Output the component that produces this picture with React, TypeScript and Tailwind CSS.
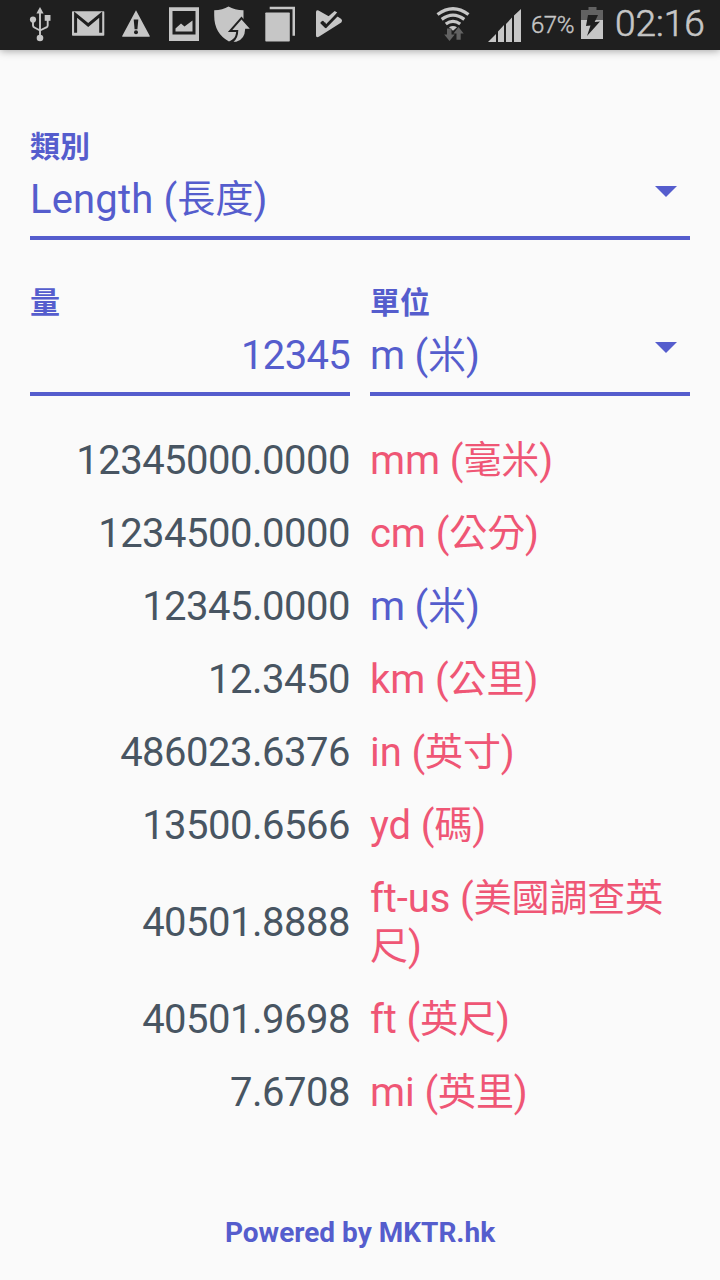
import type { ReactNode } from "react";

const G = "#c6c6c6";
const D = "#1f1f1f";

function Icon({ className, box, children }: { className: string; box: string; children: ReactNode }) {
  return (
    <svg className={`shrink-0 ${className}`} viewBox={box} fill={G}>
      {children}
    </svg>
  );
}

function StatusBar() {
  return (
    <header className="flex h-[50px] shrink-0 items-start bg-[#1f1f1f] text-[#c6c6c6] shadow-[0_1px_8px_rgba(0,0,0,0.35)]">
      <Icon className="ml-7 h-[50px] w-6" box="28 0 24 50">
        <path d="M40 7l3.6 6.4h-7.2z" />
        <circle cx="33" cy="19.5" r="3.1" />
        <rect x="44.7" y="15" width="5.8" height="5.8" />
        <circle cx="40" cy="38" r="3.3" />
        <path d="M40 12v25M33 20v5.5q0 1.5 1.5 2L40 30.5M47.7 20v5.5q0 1.5-1.5 2L40 30.5" fill="none" stroke={G} strokeWidth="1.9" />
      </Icon>
      <Icon className="ml-5 h-[50px] w-[33px]" box="72 0 33 50">
        <rect x="72" y="11.3" width="32.3" height="24.5" rx="0.8" />
        <path d="M75.6 32.8V14.6L88.2 25l12.5-10.4v18.2" fill="none" stroke={D} strokeWidth="3" />
        <path d="M77.5 13h21.5l-10.8 8.8z" />
      </Icon>
      <Icon className="ml-4 h-[50px] w-[30px]" box="121 0 30 50">
        <path d="M136 10.3l13.8 25.8q.3.7-.6.7h-26.5q-.9 0-.5-.7z" />
        <path d="M133.7 19.5h4.6l-.9 9.7h-2.8z" fill={D} />
        <circle cx="136" cy="32.3" r="2" fill={D} />
      </Icon>
      <Icon className="ml-[18px] h-[50px] w-[30px]" box="169 0 30 50">
        <path fillRule="evenodd" d="M169 7.3h30v33.7h-30zM172.5 11v23.5h23V11z" />
        <path d="M175.5 31.5v-3l5.5-5 3.500 3 8-6v11z" />
      </Icon>
      <Icon className="ml-[14px] h-[50px] w-[38px]" box="213 0 38 50">
        <path d="M228.5 6.5q6 3.500 15 3.700v8q0 16-14.500 23.300q-14.800-8-14.800-26v-5.300q8.500-.2 14.300-3.700z" />
        <path d="M241.500 19.500l8.300 9.300h-4.600q-.4 11-9 12.900h-2.700q4.700-3.500 4.800-11.700h-6z" stroke={D} strokeWidth="4" />
        <path d="M241.500 19.500l8.300 9.300h-4.600q-.4 11-9 12.900h-2.700q4.700-3.500 4.800-11.700h-6z" />
      </Icon>
      <Icon className="ml-[14px] h-[50px] w-[30px]" box="265 0 30 50">
        <rect x="265.3" y="12.5" width="24.5" height="29" rx="0.7" />
        <path d="M269.7 6.7h25.3v29h-2.5V9.3h-22.8z" />
      </Icon>
      <Icon className="ml-5 h-[50px] w-[28px]" box="315 0 28 50">
        <path d="M316 12q0-2.400 2.500-1.500l10.200 5.700 1.500.3-5 6.500-2.200-2.200-2.600 2.500 5 5 10.600-12.800 5.300 3.500q1.600 1.600 0 3.400l-22.500 14.300q-2.800 1.400-2.800-1.300z" />
        <path d="M325 19.500l3.500-3.300 6.200-5.200 2.500 1.600-11 13.400z" />
        <path d="M321.300 21.700l4.700 4.500L338 14" fill="none" stroke={D} strokeWidth="2.800" />
      </Icon>
      <Icon className="ml-[93px] h-[50px] w-[34px]" box="436 0 34 50">
        <path d="M437.500 14.500q15.500-11.500 31 0M441.700 19.300q11.300-8.300 22.600 0M445.800 24q7.200-5.300 14.400 0" fill="none" stroke={G} strokeWidth="3.300" />
        <path d="M449 27.300q4-2.800 8 0l-4 3.500z" />
        <path d="M447 28.500h4.500v6h3.300L449.500 41l-5.300-6.500h2.800zM456.500 39.700v-6.200h-3l5-6.500 5.200 6.500h-3v6.200z" fill="#626262" />
      </Icon>
      <Icon className="ml-[18px] h-[50px] w-[34px]" box="488 0 34 50">
        <path d="M488 42l8-8v8zM498 42V31.500l6-6.500v17zM506 42V24l6-6.500v24.500zM514 42V15.500l7-6.500v33z" />
      </Icon>
      <span className="ml-[9px] w-[44px] whitespace-nowrap font-[Roboto] text-[24px] font-light leading-[50px] tracking-[-0.5px] [-webkit-text-stroke:0.4px_#c6c6c6]">67%</span>
      <Icon className="ml-[6px] h-[50px] w-[22px]" box="581 0 22 50">
        <path d="M588.5 7h8v3h6.5v11h-22V10h7.5z" fill="#626262" />
        <path d="M581 20h22v19h-22z" />
        <path d="M588 15h10l-3.3 7 5.3-.5L587 36l3.500-10.500-4.500.5z" fill={D} />
      </Icon>
      <span className="ml-[12px] whitespace-nowrap font-[Roboto] text-[37px] font-light leading-[48px] [-webkit-text-stroke:0.6px_#c6c6c6]">02:16</span>
    </header>
  );
}

function Unit({ latin, cjk }: { latin: string; cjk: string }) {
  return (
    <>
      {latin} (<span className="align-[1px] font-['Noto_Sans_CJK_TC',sans-serif] text-[38px] leading-none">{cjk}</span>)
    </>
  );
}

function Label({ children }: { children: ReactNode }) {
  return <div className="h-[38px] font-['Noto_Sans_CJK_TC',sans-serif] text-[30px] font-bold leading-[36px]">{children}</div>;
}

function Caret() {
  return (
    <svg className="mr-[13px] h-[11px] w-[22px]" viewBox="0 0 22 11" fill="#555dcd">
      <path d="M0 0h22L11 11z" />
    </svg>
  );
}

const rows = [
  { value: "12345000.0000", latin: "mm", cjk: "毫米" },
  { value: "1234500.0000", latin: "cm", cjk: "公分" },
  { value: "12345.0000", latin: "m", cjk: "米" },
  { value: "12.3450", latin: "km", cjk: "公里" },
  { value: "486023.6376", latin: "in", cjk: "英寸" },
  { value: "13500.6566", latin: "yd", cjk: "碼" },
  { value: "40501.8888", latin: "ft-us", cjk: "美國調查英尺" },
  { value: "40501.9698", latin: "ft", cjk: "英尺" },
  { value: "7.6708", latin: "mi", cjk: "英里" },
];

export default function App() {
  return (
    <div className="flex h-[1280px] w-[720px] flex-col overflow-hidden bg-[#fafafa] font-[Roboto,'Noto_Sans_CJK_TC',sans-serif]">
      <StatusBar />
      <main className="flex flex-1 flex-col px-[30px] pt-[76px] text-[#555dcd]">
        <section className="h-[114px] border-b-4 border-[#555dcd]">
          <Label>類別</Label>
          <div className="flex items-start justify-between">
            <span className="text-[40px] leading-[72px] tracking-[0.15px]"><Unit latin="Length" cjk="長度" /></span>
            <span className="pt-[22px]"><Caret /></span>
          </div>
        </section>
        <section className="mt-[42px] grid grid-cols-2 gap-5">
          <div className="h-[114px] border-b-4 border-[#555dcd]">
            <Label>量</Label>
            <div className="text-right text-[40px] leading-[72px] tracking-[-0.7px]">12345</div>
          </div>
          <div className="h-[114px] border-b-4 border-[#555dcd]">
            <Label>單位</Label>
            <div className="flex items-start justify-between">
              <span className="text-[40px] leading-[72px] tracking-[-0.2px]"><Unit latin="m" cjk="米" /></span>
              <span className="pt-[22px]"><Caret /></span>
            </div>
          </div>
        </section>
        <section className="mt-[28px] text-[40px] leading-[48px]">
          {rows.map((row) => (
            <div key={row.latin} className="grid grid-cols-2 items-center gap-5 py-[12.5px]">
              <div className="text-right tracking-[-0.5px] text-[#485562]">{row.value}</div>
              <div className={row.latin === "m" ? "tracking-[-0.2px] text-[#555dcd]" : "tracking-[-0.1px] text-[#ef5675]"}>
                <Unit latin={row.latin} cjk={row.cjk} />
              </div>
            </div>
          ))}
        </section>
        <footer className="mb-[29px] mt-auto text-center text-[28px] font-bold leading-[36px]">Powered by MKTR.hk</footer>
      </main>
    </div>
  );
}
